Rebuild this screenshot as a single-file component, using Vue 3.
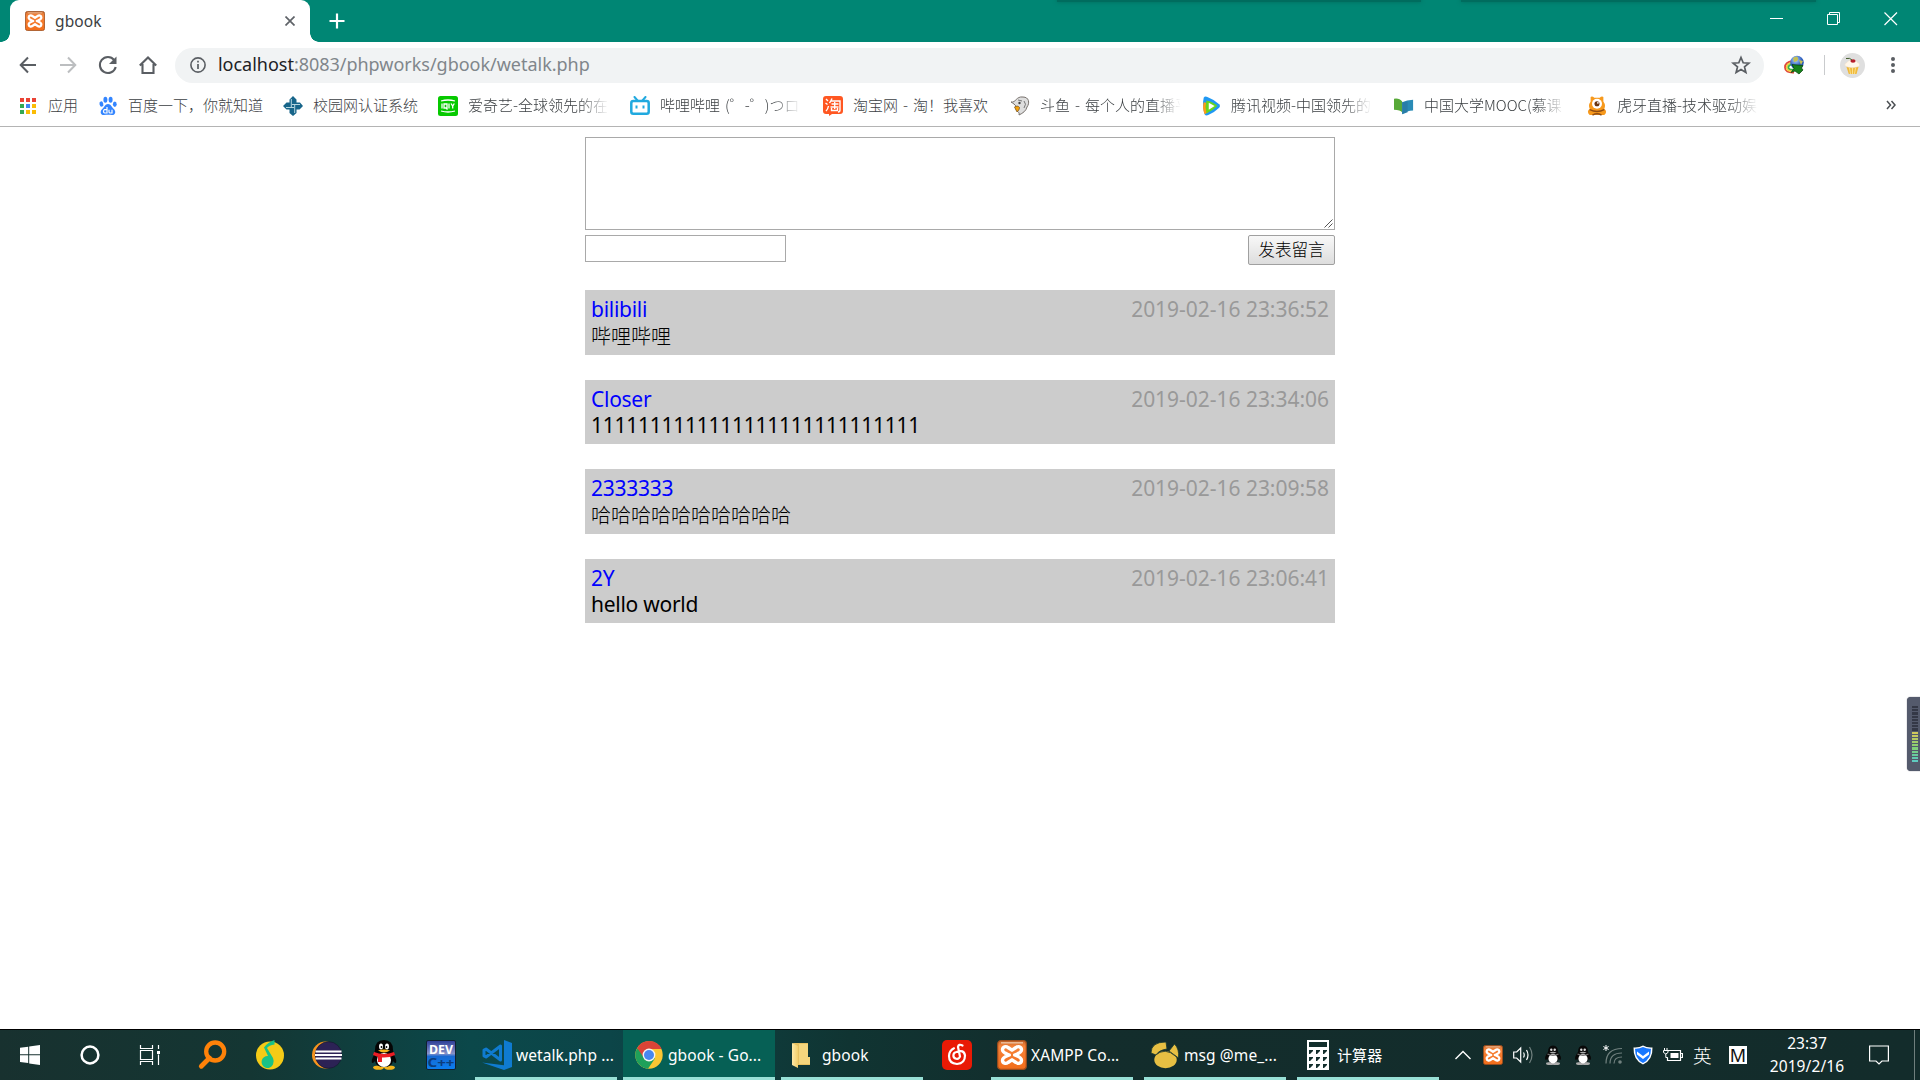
<script setup>
const bookmarks = [
  { icon: 'apps', text: '应用', width: 79, cut: false },
  { icon: 'baidu', text: '百度一下，你就知道', width: 185, cut: false },
  { icon: 'school', text: '校园网认证系统', width: 155, cut: false },
  { icon: 'iqiyi', text: '爱奇艺-全球领先的在', width: 192, cut: true },
  { icon: 'bili', text: '哔哩哔哩 (゜-゜)つロ', width: 193, cut: true },
  { icon: 'taobao', text: '淘宝网 - 淘！我喜欢', width: 187, cut: false },
  { icon: 'douyu', text: '斗鱼 - 每个人的直播平', width: 191, cut: true },
  { icon: 'tencent', text: '腾讯视频-中国领先的', width: 193, cut: true },
  { icon: 'mooc', text: '中国大学MOOC(慕课', width: 193, cut: true },
  { icon: 'huya', text: '虎牙直播-技术驱动娱', width: 180, cut: true },
]

const messages = [
  { name: 'bilibili', time: '2019-02-16 23:36:52', body: '哔哩哔哩', cjk: true },
  { name: 'Closer', time: '2019-02-16 23:34:06', body: '1111111111111111111111111111' },
  { name: '2333333', time: '2019-02-16 23:09:58', body: '哈哈哈哈哈哈哈哈哈哈', cjk: true },
  { name: '2Y', time: '2019-02-16 23:06:41', body: 'hello world' },
]

const pinned = ['win', 'cortana', 'taskview', 'search', 'qqmusic', 'eclipse', 'qq', 'dev']
const tray = ['xampp', 'speaker', 'qqtray', 'qqtray', 'wifi', 'shield', 'battery']
const meter = Array.from({ length: 18 }, (_, i) =>
  i < 8 ? '#343846' : ['#cfc85c', '#c6c95f', '#b5ca64', '#9fce6b', '#8fd070', '#80d17a', '#74d08b', '#69cd9d', '#62cbb0', '#5fcbc0'][i - 8])
</script>

<template>
  <svg class="defs" aria-hidden="true">
    <defs>
      <linearGradient id="gOrange" x1="0" y1="0" x2="0" y2="1"><stop offset="0" stop-color="#c9682c" /><stop offset=".2" stop-color="#f6843a" /><stop offset="1" stop-color="#f26d1a" /></linearGradient>
      <linearGradient id="gDev" x1="0" y1="0" x2="0" y2="1"><stop offset="0" stop-color="#2b3c96" /><stop offset=".45" stop-color="#8792c8" /><stop offset=".55" stop-color="#1769d2" /><stop offset="1" stop-color="#0b7ff0" /></linearGradient>
      <radialGradient id="gGlobe" cx=".4" cy=".3"><stop offset="0" stop-color="#b5d5ff" /><stop offset="1" stop-color="#2456b8" /></radialGradient>
      <linearGradient id="gFolder" x1="0" y1="0" x2="1" y2="0"><stop offset="0" stop-color="#ffe9a6" /><stop offset="1" stop-color="#f3cf6b" /></linearGradient>
      <symbol id="xampp" viewBox="0 0 30 30">
        <rect x=".7" y=".7" width="28.6" height="28.6" rx="3" fill="url(#gOrange)" stroke="#9c4c1c" stroke-width="1.2" />
        <path d="M4 2.8h22" stroke="#eab792" stroke-width="1.6" />
        <path d="M12.3 15C9.500 13.700 5.500 13 5.500 9.800C5.500 6.500 9 6 11 7.500L15 10.200L19 7.500C21 6 24.500 6.500 24.500 9.800C24.500 13 20.500 13.700 17.700 15C20.500 16.300 24.500 17 24.500 20.200C24.500 23.500 21 24 19 22.500L15 19.800L11 22.500C9 24 5.500 23.500 5.500 20.200C5.500 17 9.500 16.300 12.300 15Z" fill="none" stroke="#fff" stroke-width="3.4" stroke-linejoin="round" />
      </symbol>
      <symbol id="apps" viewBox="0 0 20 20">
        <g fill="#ea4335"><path d="M2 2h4v4H2zM8 2h4v4H8zM14 2h4v4h-4z" /></g>
        <path d="M2 8h4v4H2zM2 14h4v4H2z" fill="#34a853" /><path d="M8 8h4v4H8z" fill="#4285f4" /><path d="M14 8h4v4h-4zM8 14h4v4H8zM14 14h4v4h-4z" fill="#fbbc05" />
      </symbol>
      <symbol id="baidu" viewBox="0 0 20 20">
        <g fill="#3385ff"><ellipse cx="7.400" cy="3.700" rx="2" ry="3" /><ellipse cx="12.600" cy="3.700" rx="2" ry="3" /><ellipse cx="3.400" cy="8" rx="1.900" ry="2.700" transform="rotate(-15 3.400 8)" /><ellipse cx="16.800" cy="8.200" rx="1.900" ry="2.700" /><path d="M10 8c3 0 3.500 3 5.500 4.700 3.300 2.900 1.400 6.700-1.500 6.400-2.500-.4-5-.4-8 0-3.300.300-4.700-3.800-1.500-6.400C6.600 11 7 8 10 8z" /></g>
        <path d="M9 11v6H6.700c-1.600 0-1.600-3.300 0-3.300H9M11 13.700V16q0 1 1.200 1h1.800v-3.300" fill="none" stroke="#fff" stroke-width="1.200" />
      </symbol>
      <symbol id="school" viewBox="0 0 20 20">
        <path d="M10 0l3.500 3.500v3H17L20 10l-3.500 3.500h-3V17L10 20l-3.500-3v-3.500h-3L0 10l3.500-3.500h3v-3z" fill="#17658a" />
        <path d="M8.300 3v8M3 11.500h8M11.700 9v8M9 8.500h8" stroke="#b5d5df" stroke-width="1" />
      </symbol>
      <symbol id="iqiyi" viewBox="0 0 20 20">
        <rect width="20" height="20" rx="2.500" fill="#06c900" /><path d="M3 5q7-2 14 0M3 15q7 2 14 0M4 7.500v5M6 8h3v4H6zM8 12l1.500 1.500M11 7.500v5M13 7.500l1.700 2.500 1.600-2.500M14.700 10v2.500" fill="none" stroke="#fff" stroke-width="1.300" />
      </symbol>
      <symbol id="bili" viewBox="0 0 20 20">
        <rect x="1.300" y="5" width="17.400" height="12.800" rx="2" fill="none" stroke="#20a9df" stroke-width="2.500" /><path d="M4.500 1l3 3.500M15.500 1l-3 3.500" stroke="#20a9df" stroke-width="2" stroke-linecap="round" /><path d="M6.500 9.500v3M13.500 9.500v3" stroke="#20a9df" stroke-width="2" />
      </symbol>
      <symbol id="taobao" viewBox="0 0 20 20">
        <path d="M3 0h14q3 0 3 3v12q0 3-3 3H9l-3 2v-2H3q-3 0-3-3V3q0-3 3-3z" fill="#ff5722" /><path d="M3 3l2 2M2.500 7l2 1.500M3 15q2-2 2.500-5M9 2.500Q8 5 6.500 7M8 5h9v9q0 2-2 2M8.500 8h7M7.500 11h8M11.700 6v7M8.500 12v2.500h6V12" fill="none" stroke="#fff" stroke-width="1.400" />
      </symbol>
      <symbol id="douyu" viewBox="0 0 20 20">
        <path d="M1 6c5 1 5-6 12-5 6 0 7 6 4 10-1 4-4 6-8 8 1-3-2-3-3-6 1-2 0-4-5-7z" fill="#dedede" stroke="#77716d" /><path d="M4.500 11c2-1.500 4-1 5 .5 0 2-1 3-2.500 4.500z" fill="#f5a30c" stroke="#6b4b20" stroke-width=".7" /><path d="M8 4l4 1M14 5q3 3 0 7" stroke="#777" fill="none" /><circle cx="9.500" cy="7" r="1.200" fill="#444" />
      </symbol>
      <symbol id="tencent" viewBox="0 0 22 22">
        <path d="M3 2q1-2 4-1 8 3 13 8 2 2 0 4-5 5-12 8-3 1-4-1Q1 11 3 2z" fill="#1f98f3" /><path d="M3 7l5 1v10l-4 2Q1 14 3 7z" fill="#ff9a17" /><path d="M6 5q8 2 12 6-5 5-12 8Q4 12 6 5z" fill="#67d51d" /><path d="M8.500 7.500L15 11l-6.500 4z" fill="#fff" />
      </symbol>
      <symbol id="mooc" viewBox="0 0 22 18"><path d="M0 1q6-1 9 3v12q-2-3-9-3z" fill="#57a938" /><path d="M9 5q5-3 12-3v12q-7 0-12 4z" fill="#298bb6" /><path d="M9 5l6-1v12l-6 2z" fill="#287da8" /></symbol>
      <symbol id="huya" viewBox="0 0 22 22">
        <path d="M4 1q2-1 4 1h6q2-2 4-1v5q3 4 1 8 4 3 0 7H3q-4-4 0-7-2-4 1-8z" fill="#f7991c" /><circle cx="11" cy="8.500" r="5.500" fill="#fff" /><circle cx="11" cy="8.500" r="2.800" fill="#6a3512" /><circle cx="12" cy="7.500" r="1" fill="#fff" /><path d="M3 15q8 4 16 0M6 21q5-3 10 0" stroke="#914c12" fill="none" stroke-width="1.500" />
      </symbol>
      <symbol id="idm" viewBox="0 0 20 20">
        <path d="M10 17.500Q1 18 1 12.500T8.500 6" fill="none" stroke="#e0483c" stroke-width="1.800" /><path d="M10 16Q2.700 16.500 2.700 12.500T8.500 7.700" fill="none" stroke="#f2d03b" stroke-width="1.800" /><path d="M10 14.500Q4.400 15 4.400 12.500T8.500 9.400" fill="none" stroke="#3ab54a" stroke-width="1.800" />
        <circle cx="13" cy="7.500" r="6.800" fill="url(#gGlobe)" /><path d="M9 3q4-3 5 0t-4 4zM15 5l4 1-2 4z" fill="#c4bf54" /><path d="M8 9.500l11 1-1.500 2.500 1.500 2-4 4-4-3-4 1.500 3-4z" fill="#15831c" stroke="#073f0b" stroke-width=".7" />
      </symbol>
      <symbol id="cake" viewBox="0 0 25 25">
        <circle cx="12.500" cy="12.500" r="12.500" fill="#dfdfdf" /><path d="M6.500 14h12l-2 7H8.800z" fill="#f0b93b" /><path d="M9.500 15l1 6M12.500 15v6M15.500 15l-1 6" stroke="#fbe08c" /><path d="M5 13q-1-3 2-3.500 1-2.500 5-2.500 5 0 5.500 2.500 3 .5 2 3.500-7 3.500-14.500 0z" fill="#fff6e9" stroke="#eadbc5" stroke-width=".5" /><ellipse cx="13" cy="8" rx="2.600" ry="1.800" fill="#b81d2c" /><path d="M6 5.500q4-1 6 1.500" stroke="#405b2a" fill="none" />
      </symbol>
      <symbol id="win" viewBox="0 0 30 30"><path d="M5 7.800l8.200-1.100v7.600H5zM14.200 6.500L25 5v9.300H14.200zM5 15.300h8.200V23L5 21.900zM14.200 15.300H25V25l-10.800-1.600z" fill="#fff" /></symbol>
      <symbol id="cortana" viewBox="0 0 30 30"><circle cx="15" cy="15" r="8.400" fill="none" stroke="#fff" stroke-width="2.500" /></symbol>
      <symbol id="taskview" viewBox="0 0 30 30"><path d="M5.500 5v3.500h12V5M5.500 25v-3.500h12V25M5.500 10.500h12v9h-12zM23.500 5v4M23.500 14.500V25" fill="none" stroke="#fff" stroke-width="1.200" /><path d="M22 11h3v3h-3z" fill="#fff" /></symbol>
      <symbol id="search" viewBox="0 0 30 30"><circle cx="18.200" cy="11.500" r="9" fill="none" stroke="#ff8209" stroke-width="4.300" /><path d="M12.500 18l-8.200 8.200" stroke="#ff8209" stroke-width="4.800" stroke-linecap="round" /></symbol>
      <symbol id="qqmusic" viewBox="0 0 30 30"><circle cx="15" cy="15.500" r="14" fill="#f5cb17" /><path d="M19.500 0v4.500Q14 5 12 8l6 10q1.500 3.500 0 6.500a6 6 0 1 1-5-8.500L9 7.500Q13 2 19.500 0z" fill="#19c287" /></symbol>
      <symbol id="eclipse" viewBox="0 0 30 30"><circle cx="13.500" cy="15" r="13.500" fill="#f7941e" /><circle cx="16.500" cy="15" r="13.300" fill="#2c2255" stroke="#161a30" stroke-width=".7" /><path d="M3.500 11.500h26M3 15h27M3.500 18.500h26" stroke="#fff" stroke-width="1.900" /></symbol>
      <symbol id="qq" viewBox="0 0 30 30">
        <ellipse cx="9.500" cy="27.600" rx="5.500" ry="2.200" fill="#f6b51c" /><ellipse cx="20.500" cy="27.600" rx="5.500" ry="2.200" fill="#f6b51c" /><path d="M6 10Q6 0 15 0t9 10l1 5q3 5 2 8-2 0-3-2-1 6-9 6t-9-6q-1 2-3 2-1-3 2-8z" fill="#050505" /><ellipse cx="15" cy="20" rx="7" ry="7" fill="#fff" /><ellipse cx="12" cy="6.500" rx="2" ry="3" fill="#fff" /><ellipse cx="18" cy="6.500" rx="2" ry="3" fill="#fff" /><circle cx="12.500" cy="7" r=".9" /><circle cx="17.500" cy="7" r=".9" /><path d="M9 10.500q6-2 12 0-6 4-12 0z" fill="#f6b51c" /><path d="M5 12q10 4 20 0l1 3q-6 3-13 2.500V22H9v-5l-5-2z" fill="#ec1d24" />
      </symbol>
      <symbol id="qqtray" viewBox="0 0 20 20"><ellipse cx="7" cy="18.500" rx="4" ry="1.500" fill="#aaa" /><ellipse cx="13" cy="18.500" rx="4" ry="1.500" fill="#aaa" /><path d="M5 7q0-6.500 5-6.500T15 7q4 5 2.500 8l-2-1q-1 4-5.500 4t-5.500-4l-2 1Q1 12 5 7z" fill="#080808" /><ellipse cx="10" cy="13.800" rx="4.600" ry="4.700" fill="#fff" /><circle cx="8.300" cy="4.700" r="1.200" fill="#ddd" /><circle cx="11.700" cy="4.700" r="1.200" fill="#ddd" /><path d="M6.500 7.500q3.500-1.500 7 0-3.500 2-7 0z" fill="#aaa" /><path d="M4.500 9q5.500 2.500 11 0" stroke="#777" stroke-width="1.300" fill="none" /></symbol>
      <symbol id="dev" viewBox="0 0 30 30"><rect x=".5" y=".5" width="29" height="29" rx="1.500" fill="url(#gDev)" stroke="#10202f" /><text x="15" y="14" text-anchor="middle" textLength="24" lengthAdjust="spacingAndGlyphs" font-family="Noto Sans, sans-serif" font-weight="700" font-size="13" fill="#fff">DEV</text><text x="15" y="26.500" text-anchor="middle" textLength="27" lengthAdjust="spacingAndGlyphs" font-family="Noto Sans, sans-serif" font-weight="700" font-size="13" fill="#0c3d7c">C++</text></symbol>
      <symbol id="vscode" viewBox="0 0 30 30"><path d="M22 0l8 3v24l-8 3L0 22.500l22 2.800z" fill="#0f7bd0" /><path d="M18.500 6v14L4 9 2 10v6l2 1L18.500 6z" fill="none" stroke="#0f7bd0" stroke-width="3" stroke-linejoin="round" /></symbol>
      <symbol id="chrome" viewBox="0 0 30 30"><circle cx="15" cy="15" r="13.700" fill="#fbc633" /><path d="M15 15L3.100 8.200A13.700 13.700 0 0 0 14 28.700L20.900 18.400z" fill="#1fa05a" /><path d="M15 15L3.100 8.200A13.700 13.700 0 0 1 27.600 9H15z" fill="#db4437" /><path d="M3.300 8l6 9L15 9z" fill="#db4437" /><circle cx="15" cy="15" r="6.400" fill="#f4f4f4" /><circle cx="15" cy="15" r="5" fill="#4787f0" /></symbol>
      <symbol id="folder" viewBox="0 0 18 27"><path d="M1 1h15v14h2v8H6z" fill="#e8c160" /><path d="M0 1l6 3v22L0 23z" fill="url(#gFolder)" /><path d="M7 2h9v13h2v7H7z" fill="#f5d67d" /></symbol>
      <symbol id="netease" viewBox="0 0 30 30"><rect width="30" height="30" rx="5" fill="#e91a05" /><path d="M20.500 5.500q-4-2-4.500 1.500l2 9.500a3.400 3.400 0 1 1-3.500-4.500Q22 9 23 15.500 23 23.500 15 24q-8-.5-8-8Q7.200 10.500 12 8.300" fill="none" stroke="#fff" stroke-width="2.200" stroke-linecap="round" /></symbol>
      <symbol id="navicat" viewBox="0 0 30 30"><ellipse cx="15.500" cy="19.800" rx="11.200" ry="8.500" fill="#e7bf43" /><path d="M1 13Q1 2 16 2l1 7Q9 10 6 15zM19 11l5.500-7q5 5 4 14z" fill="#e7bf43" stroke="#15362f" stroke-width=".8" /><path d="M5 15.500q10-9 21 1" stroke="#3e4c31" fill="none" /></symbol>
      <symbol id="calc" viewBox="0 0 22 30"><path d="M0 0h22v30H0z" fill="#fff" /><path d="M2 2h18v5H2z" fill="#132f2d" /><path d="M2 10h4v1l-3 3H2zM9 10h4v1l-3 3H9zM16 10h4v1l-3 3h-1zM2 17h4v1l-3 3H2zM9 17h4v1l-3 3H9zM16 17h4v1l-3 3h-1zM2 24h4v1l-3 3H2zM9 24h4v1l-3 3H9zM16 24h4v1l-3 3h-1z" fill="#132f2d" /></symbol>
      <symbol id="speaker" viewBox="0 0 20 20"><path d="M.7 7h3l4-4v14l-4-4h-3z" fill="none" stroke="#fff" stroke-width="1.200" /><path d="M10.500 7.500q1.500 2.500 0 5M13.500 5q3 5 0 10" fill="none" stroke="#fff" stroke-width="1.200" /><path d="M16.500 2q5 8 0 16" fill="none" stroke="#71817f" stroke-width="1.200" /></symbol>
      <symbol id="wifi" viewBox="0 0 20 20"><path d="M3 18.500Q3 3.500 19 3.500M7 18.500Q7 8 19 8M11 18.500q0-6.500 8-6.500" fill="none" stroke="#71817f" stroke-width="1.200" /><circle cx="17" cy="17" r="1.800" fill="#71817f" /><path d="M3 0v6M.4 1.500l5.200 3M5.600 1.500l-5.200 3" stroke="#fff" /></symbol>
      <symbol id="shield" viewBox="0 0 20 20"><path d="M10 .5Q14 3 19.500 2.500 20 15 10 19.500 0 15 .5 2.500 6 3 10 .5z" fill="#fff" /><path d="M10 2q4 2 8 1.700Q18 14 10 18 2 14 2 3.700 6 4 10 2z" fill="#1978ff" /><path d="M4 6.500l6 4.500 6-4.500v3L10 14 4 9.500z" fill="#fff" /></symbol>
      <symbol id="battery" viewBox="0 0 20 20"><path d="M5 5.500h12.500v10H4.500v-3M18 8.500h1.500v4H18" fill="none" stroke="#fff" stroke-width="1.200" /><path d="M7.500 8h8v5h-8z" fill="#fff" /><path d="M1.500 3v2M4 3v2M.5 5.500H5v2L2.800 9 .5 7.500zM2.800 9v3.500h2" fill="#132f2d" stroke="#fff" /></symbol>
    </defs>
  </svg>

  <div class="screen">
    <header class="tabs">
      <div class="tab">
        <svg class="fav"><use href="#xampp" /></svg>
        <span class="tab-title">gbook</span>
        <svg class="close" viewBox="0 0 10 10"><path d="M.5.5l9 9M9.500.5l-9 9" stroke="#5f6368" stroke-width="1.700" /></svg>
      </div>
      <svg class="plus" viewBox="0 0 16 16"><path d="M8 .5v15M.5 8h15" stroke="#fff" stroke-width="2.200" /></svg>
      <div class="win-buttons">
        <svg viewBox="0 0 14 14"><path d="M0 6.500h13" stroke="#fff" /></svg>
        <svg viewBox="0 0 14 14"><path d="M.5 2.500h10v10h-10zM2.500 2.500v-2h10v10h-2" fill="none" stroke="#fff" /></svg>
        <svg viewBox="0 0 14 14"><path d="M.5.5l12.500 12.500M13 .5L.5 13" stroke="#fff" stroke-width="1.200" /></svg>
      </div>
      <i class="edge-shadow first"></i><i class="edge-shadow second"></i>
    </header>

    <nav class="toolbar">
      <svg class="nav" viewBox="0 0 20 20"><path d="M18 10H3M10 2.500L2.700 10l7.300 7.500" fill="none" stroke="#5a5e63" stroke-width="2" /></svg>
      <svg class="nav" viewBox="0 0 20 20"><path d="M2 10h15M10 2.500l7.300 7.500-7.300 7.500" fill="none" stroke="#bcbec0" stroke-width="2" /></svg>
      <svg class="nav" viewBox="0 0 20 20"><path d="M16.200 5A8 8 0 1 0 17.700 12" fill="none" stroke="#5a5e63" stroke-width="2.100" /><path d="M18.500 1.500V9H11z" fill="#5a5e63" /></svg>
      <svg class="nav" viewBox="0 0 20 20"><path d="M1.800 10.500L10 2.400l8.200 8.100M4.500 9v9h11V9" fill="none" stroke="#5a5e63" stroke-width="2.100" /></svg>
      <div class="omnibox">
        <svg class="info" viewBox="0 0 16 16"><circle cx="8" cy="8" r="7.100" fill="none" stroke="#5a5e63" stroke-width="1.600" /><path d="M8 7v5M8 3.800v1.700" stroke="#5a5e63" stroke-width="1.700" /></svg>
        <span class="url"><b>localhost</b>:8083/phpworks/gbook/wetalk.php</span>
        <svg class="star" viewBox="0 0 20 20"><path d="M10 2.500l2.200 5.300 5.700.4-4.400 3.700 1.400 5.600-4.900-3-4.900 3 1.400-5.600-4.400-3.700 5.700-.4z" fill="none" stroke="#5a5e63" stroke-width="1.700" /></svg>
      </div>
      <svg class="idm"><use href="#idm" /></svg>
      <i class="sep"></i>
      <svg class="avatar"><use href="#cake" /></svg>
      <svg class="dots" viewBox="0 0 4 16"><circle cx="2" cy="2" r="2" /><circle cx="2" cy="8" r="2" /><circle cx="2" cy="14" r="2" /></svg>
    </nav>

    <div class="bookmarks">
      <div v-for="b in bookmarks" :key="b.icon" class="bm" :style="{ width: b.width + 'px' }">
        <svg><use :href="'#' + b.icon" /></svg>
        <span :class="{ cut: b.cut }">{{ b.text }}</span>
      </div>
      <svg class="more" viewBox="0 0 10 10"><path d="M1 1l3.500 4L1 9M5.500 1L9 5 5.500 9" fill="none" stroke="#4b4f53" stroke-width="1.500" /></svg>
    </div>

    <main>
      <div class="area"><svg viewBox="0 0 9 9"><path d="M.5 8.500l8-8M4.500 8.500l4-4" stroke="#555" /></svg></div>
      <div class="form"><div class="field"></div><button>发表留言</button></div>
      <article v-for="m in messages" :key="m.time">
        <div class="head"><span class="name">{{ m.name }}</span><time>{{ m.time }}</time></div>
        <p :class="{ cjk: m.cjk }">{{ m.body }}</p>
      </article>
    </main>

    <div class="meter"><i v-for="(c, i) in meter" :key="i" :style="{ background: c }"></i></div>

    <footer>
      <div v-for="p in pinned" :key="p" class="pin" :class="p"><svg><use :href="'#' + p" /></svg></div>
      <div class="app code"><svg><use href="#vscode" /></svg><span>wetalk.php ...</span></div>
      <div class="app active"><svg><use href="#chrome" /></svg><span>gbook - Go...</span></div>
      <div class="app dir"><svg><use href="#folder" /></svg><span>gbook</span></div>
      <div class="netease"><svg><use href="#netease" /></svg></div>
      <div class="app xa"><svg><use href="#xampp" /></svg><span>XAMPP Co...</span></div>
      <div class="app nv"><svg><use href="#navicat" /></svg><span>msg @me_...</span></div>
      <div class="app ca"><svg><use href="#calc" /></svg><span>计算器</span></div>
      <div class="tray">
        <svg class="chev" viewBox="0 0 16 10"><path d="M.5 9L8 1.500 15.500 9" fill="none" stroke="#fff" stroke-width="1.400" /></svg>
        <svg v-for="(t, i) in tray" :key="i" class="ti"><use :href="'#' + t" /></svg>
        <span class="ime">英</span><span class="m">M</span>
      </div>
      <div class="clock"><span>23:37</span><span class="date">2019/2/16</span></div>
      <svg class="note" viewBox="0 0 20 20"><path d="M.6 1h18.800v15H13l-3 3-3-3H.6z" fill="none" stroke="#fff" stroke-width="1.200" /></svg>
      <i class="peek"></i>
    </footer>
  </div>
</template>

<style>
html, body { margin: 0; background: #fff; overflow: hidden; }
</style>

<style scoped>
.defs { position: absolute; width: 0; height: 0; }
.screen { position: relative; width: 1920px; height: 1080px; display: flex; flex-direction: column; overflow: hidden; background: #fff; font-family: "Noto Sans", "Noto Sans CJK SC", sans-serif; color: #3c4043; }
svg { display: block; flex: none; }
.screen * { box-sizing: border-box; }
.tabs { position: relative; height: 42px; flex: none; display: flex; align-items: center; background: #008674; }
.tab { position: relative; width: 300px; height: 42px; margin-left: 10px; border-radius: 9px 9px 0 0; background: #fff; display: flex; align-items: center; padding: 0 15px; }
.tab::before, .tab::after { content: ""; position: absolute; bottom: 0; width: 9px; height: 9px; }
.tab::before { left: -9px; background: radial-gradient(circle at 0 0, transparent 8.500px, #fff 9px); }
.tab::after { right: -9px; background: radial-gradient(circle at 100% 0, transparent 8.500px, #fff 9px); }
.fav { width: 20px; height: 20px; }
.tab-title { font-size: 15.500px; margin-left: 10px; flex: 1; letter-spacing: .1px; }
.close { width: 10px; height: 10px; }
.plus { width: 16px; height: 16px; margin-left: 19px; }
.win-buttons { margin-left: auto; display: flex; gap: 43px; padding-right: 22px; margin-top: -5px; }
.win-buttons svg { width: 14px; height: 14px; }
.edge-shadow { position: absolute; top: -3px; height: 5px; background: #006c5e; box-shadow: 0 0 4px #006c5e; }
.first { left: 1057px; width: 364px; }
.second { left: 1461px; width: 355px; }
.toolbar { height: 44px; flex: none; display: flex; align-items: center; padding: 2px 0 0 18px; }
.nav { width: 20px; height: 20px; margin-right: 20px; }
.omnibox { width: 1589px; height: 35px; margin-left: -3px; border-radius: 18px; background: #f1f3f4; display: flex; align-items: center; padding: 0 13px 0 15px; }
.info { width: 16px; height: 16px; }
.url { flex: 1; margin: -2px 0 0 12px; font-size: 18px; line-height: 34px; color: #80868b; letter-spacing: -.02px; }
.url b { font-weight: 400; color: #202124; }
.star { width: 20px; height: 20px; }
.idm { width: 20px; height: 20px; margin-left: 20px; }
.sep { width: 1px; height: 20px; background: #c9cbcd; margin-left: 20px; }
.avatar { width: 25px; height: 25px; margin-left: 15px; }
.dots { width: 4px; height: 16px; margin-left: 26px; fill: #5a5e63; }
.bookmarks { height: 41px; flex: none; display: flex; align-items: center; padding-left: 18px; border-bottom: 1px solid #b4b4b4; }
.bm { display: flex; align-items: center; flex: none; }
.bm + .bm { position: relative; left: 1px; }
.bm svg { width: 20px; height: 20px; margin-right: 10px; }
.bm span { margin-top: -2px; font-family: "Noto Sans CJK SC", sans-serif; font-size: 15px; font-weight: 300; line-height: 24px; white-space: nowrap; word-spacing: 1.700px; }
.bm span.cut { width: 141px; overflow: hidden; -webkit-mask-image: linear-gradient(90deg, #000 112px, transparent 141px); mask-image: linear-gradient(90deg, #000 112px, transparent 141px); }
.more { width: 10px; height: 10px; margin: -2px 24px 0 auto; }
main { width: 750px; margin: 10px auto 0; flex: 1; }
.area { height: 93px; border: 1px solid #a9a9a9; display: flex; justify-content: flex-end; align-items: flex-end; padding: 0 1px 1px 0; }
.area svg { width: 9px; height: 9px; }
.form { display: flex; justify-content: space-between; align-items: flex-start; height: 60px; padding-top: 5px; }
.field { width: 201px; height: 27px; border: 1px solid #a9a9a9; }
button { width: 87px; height: 30px; padding: 0 0 2px; border: 1px solid #a0a0a0; border-radius: 2px; background: linear-gradient(#f8f8f8, #ddd); color: #000; font: 300 16.600px/24px "Noto Sans CJK SC", sans-serif; }
article { height: 64.600px; margin-bottom: 25px; padding: 6px; background: #ccc; font-size: 21px; letter-spacing: -.28px; color: #000; line-height: 27px; }
.head { display: flex; justify-content: space-between; height: 26.500px; }
.name { color: #00f; }
time { color: #999; letter-spacing: -.03px; }
p { margin: 0; height: 26px; letter-spacing: -.26px; }
p.cjk { font: 300 20px/26px "Noto Sans CJK SC", sans-serif; letter-spacing: 0; }
.meter { position: absolute; left: 1907px; top: 697px; width: 14px; height: 74px; background: #545a6c; border-radius: 4px 0 0 4px; box-shadow: 0 0 1px #343846; padding: 9px 3px 8px 5px; display: flex; flex-direction: column; gap: 1px; }
.meter i { height: 2.200px; }
footer { height: 51px; flex: none; display: flex; align-items: center; border-top: 1px solid #000; background: linear-gradient(90deg, #18312f 0, #143633 250px, #0b484a 470px, #0c4548 610px, #103432 850px, #132d2c 1050px, #132c2b 100%); color: #fff; font-size: 15.500px; }
.pin { width: 60px; flex: none; display: flex; justify-content: center; }
.pin svg { width: 30px; height: 30px; }
.pin.search { width: 63px; }
.pin.qqmusic { width: 53px; }
.pin.eclipse { width: 62px; }
.pin.qq { width: 52px; }
.pin.dev { width: 62px; }
.app { flex: none; align-self: stretch; width: 142px; margin-left: 3px; padding: 0 0 0 6px; display: flex; align-items: center; border-bottom: 3px solid #98e0d6; white-space: nowrap; }
.app svg { width: 30px; height: 30px; margin-top: 3px; }
.app span { margin: 3px 0 0 4px; line-height: 22px; letter-spacing: .08px; }
.app.code { padding-left: 7px; }
.app.active { width: 152px; margin-left: 6px; padding-left: 11px; background: #066055; }
.app.dir { margin-left: 6px; padding-left: 11px; }
.app.dir svg { width: 18px; height: 27px; }
.app.dir span { margin-left: 12px; }
.netease { flex: none; width: 30px; margin: 0 19px; }
.netease svg { width: 30px; height: 30px; }
.app.xa { margin-left: 0; }
.app.nv { margin-left: 11px; }
.app.ca { margin-left: 11px; padding-left: 10px; }
.app.ca svg { width: 22px; }
.app.ca span { margin-left: 8px; font-size: 15px; }
.tray { display: flex; flex: none; align-items: center; margin-left: 16px; }
.chev { width: 16px; height: 10px; margin-right: 12px; }
.ti { width: 20px; height: 20px; margin-right: 10px; }
.ime { font-family: "Noto Sans CJK SC", sans-serif; font-size: 18.500px; font-weight: 300; line-height: 26px; width: 20px; margin-top: -1px; }
.m { width: 18px; height: 18px; margin-left: 16px; background: #fff; color: #111; font-size: 18px; line-height: 18px; text-align: center; }
.clock { flex: none; width: 90px; margin-left: 15px; display: flex; flex-direction: column; align-items: center; line-height: 23px; font-size: 15.500px; }
.date { letter-spacing: .12px; }
.note { width: 20px; height: 20px; margin-left: 17px; }
.peek { width: 1px; align-self: stretch; background: #6f7f7d; margin-left: 25px; }
</style>
